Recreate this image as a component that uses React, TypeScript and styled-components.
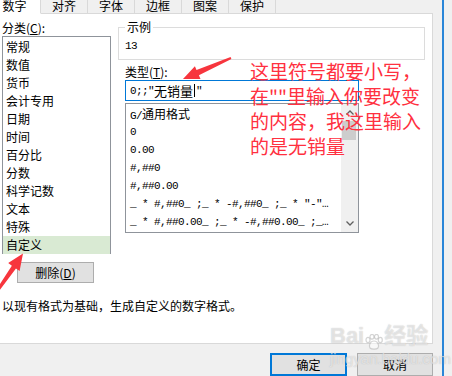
import React from 'react';
import styled, { createGlobalStyle } from 'styled-components';

const CJK = `"Noto Sans CJK SC", "Noto Sans", sans-serif`;
const MONO = `"Liberation Mono", "Noto Sans CJK SC", monospace`;

const GlobalStyle = createGlobalStyle`
  html, body { margin: 0; padding: 0; background: #f0f0f0; }
  #root { width: 452px; height: 376px; overflow: hidden; }
`;

// 整个截图
const Page = styled.div`
  position: relative;
  display: flex;
  width: 452px;
  height: 376px;
  overflow: hidden;
  background: #f0f0f0;
  font-family: ${CJK};
  font-size: 12px;
  color: #000;
`;

// 设置单元格格式 对话框
const Dialog = styled.div`
  display: flex;
  flex-direction: column;
  width: 433px;
  flex-shrink: 0;
`;

const TabBar = styled.div`
  display: flex;
  height: 14px;
  margin-left: -11px;
`;

const Tab = styled.div<{ $active?: boolean }>`
  box-sizing: border-box;
  width: ${p => (p.$active ? 52 : 47)}px;
  height: 14px;
  border-right: 1px solid #d9d9d9;
  border-bottom: 1px solid ${p => (p.$active ? '#fff' : '#d9d9d9')};
  background: ${p => (p.$active ? '#fff' : '#f0f0f0')};
  text-align: center;
  line-height: 11px;
  overflow: hidden;
`;

const TabFill = styled.div`
  flex: 1;
  border-bottom: 1px solid #d9d9d9;
`;

const Panel = styled.div`
  box-sizing: border-box;
  height: 332px;
  padding-left: 2px;
  background: #fff;
  border-right: 1px solid #d9d9d9;
  border-bottom: 1px solid #d9d9d9;
`;

const Columns = styled.div`
  display: flex;
  gap: 7px;
`;

const LeftCol = styled.div`
  display: flex;
  flex-direction: column;
  width: 109px;
  padding-top: 6px;
`;

const RightCol = styled.div`
  display: flex;
  flex-direction: column;
  width: 307px;
  padding-top: 7px;
`;

const FieldLabel = styled.div<{ $indent?: number }>`
  line-height: 16px;
  height: 16px;
  margin-left: ${p => p.$indent ?? 0}px;
  margin-top: ${p => (p.$indent ? 4 : 0)}px;
`;

const Mnemonic = styled.span`
  text-decoration: underline;
`;

const CategoryList = styled.div`
  box-sizing: border-box;
  width: 109px;
  height: 218px;
  padding-top: 1px;
  border: 1px solid #8f949b;
`;

const CategoryItem = styled.div<{ $selected?: boolean }>`
  height: 18px;
  line-height: 18px;
  padding-left: 3px;
  background: ${p => (p.$selected ? '#d9ead3' : 'transparent')};
`;

const PushButton = styled.div`
  box-sizing: border-box;
  width: 77px;
  height: 21px;
  margin: 8px 0 0 15px;
  border: 1px solid #adadad;
  background: #e1e1e1;
  text-align: center;
  line-height: 19px;
`;

const SampleBox = styled.fieldset`
  box-sizing: border-box;
  width: 307px;
  min-width: 0;
  margin: 0;
  padding: 5px 6px 5px;
  border: 1px solid #dcdcdc;
`;

const SampleLegend = styled.legend`
  padding: 0 2px;
  font-size: 12px;
  line-height: 12px;
`;

const SampleValue = styled.div`
  font-family: ${MONO};
  font-size: 11px;
  letter-spacing: -0.6px;
  line-height: 16px;
`;

const TypeInput = styled.div`
  box-sizing: border-box;
  display: flex;
  align-items: center;
  width: 234px;
  height: 21px;
  margin-left: 7px;
  padding-left: 4px;
  border: 1px solid #0078d7;
  font-family: ${MONO};
  font-size: 11px;
  letter-spacing: -0.6px;
`;

const Han = styled.span<{ $size?: number }>`
  font-family: ${CJK};
  font-size: ${p => p.$size ?? 12}px;
  letter-spacing: 0;
`;

const Caret = styled.span`
  display: inline-block;
  width: 1px;
  height: 13px;
  margin: 0 1px 0 1px;
  background: #000;
`;

const FormatList = styled.div`
  box-sizing: border-box;
  display: flex;
  width: 234px;
  height: 130px;
  margin: 2px 0 0 7px;
  border: 1px solid #8f949b;
`;

const FormatItems = styled.div`
  flex: 1;
  min-width: 0;
  padding: 1px 0 0 4px;
  overflow: hidden;
`;

const FormatItem = styled.div`
  height: 18px;
  line-height: 18px;
  font-family: ${MONO};
  font-size: 11px;
  letter-spacing: -0.6px;
  white-space: nowrap;
`;

const Scrollbar = styled.div`
  display: flex;
  flex-direction: column;
  width: 17px;
  background: #f0f0f0;
`;

const ScrollButton = styled.div`
  display: flex;
  align-items: center;
  justify-content: center;
  height: 17px;
`;

const ScrollThumb = styled.div`
  height: 19px;
  margin: 0 2px 0 1px;
  background: #cdcdcd;
`;

const ScrollTrack = styled.div`
  flex: 1;
`;

const Description = styled.div`
  margin-top: 15px;
  line-height: 16px;
`;

const Footer = styled.div`
  display: flex;
  justify-content: flex-end;
  gap: 10px;
  padding-top: 9px;
`;

const DialogButton = styled.div<{ $primary?: boolean }>`
  box-sizing: border-box;
  width: ${p => (p.$primary ? 77 : 76)}px;
  height: 23px;
  border: ${p => (p.$primary ? '2px solid #0078d7' : '1px solid #adadad')};
  background: #e1e1e1;
  text-align: center;
  line-height: ${p => (p.$primary ? 19 : 21)}px;
`;

// 右侧窗口边缘
const WindowEdge = styled.div`
  flex: 1;
  display: flex;
  padding-left: 9px;
`;

const BlueLine = styled.div`
  width: 2px;
  background: #2a86d8;
`;

// 红色标注
const Annotation = styled.div`
  position: absolute;
  left: 250px;
  top: 58px;
  font-size: 19px;
  line-height: 25px;
  color: #ff3040;
  white-space: pre;
`;

const ArrowLayer = styled.svg`
  position: absolute;
  left: 0;
  top: 0;
  pointer-events: none;
`;

// 百度经验水印
const Watermark = styled.div`
  position: absolute;
  left: 330px;
  top: 322px;
  display: flex;
  flex-direction: column;
  color: rgba(255, 255, 255, 0.55);
  text-shadow: 0 0 1px rgba(150, 150, 150, 0.6);
  font-family: "Liberation Sans", ${CJK};
  pointer-events: none;
`;

const WatermarkLogo = styled.div`
  display: flex;
  align-items: flex-end;
  font-size: 22px;
  font-weight: bold;
  line-height: 28px;
`;

const WatermarkUrl = styled.div`
  font-size: 15px;
  line-height: 18px;
`;

const categories = ['常规', '数值', '货币', '会计专用', '日期', '时间', '百分比', '分数', '科学记数', '文本', '特殊', '自定义'];

const formats: React.ReactNode[] = [
  <>G/<Han>通用格式</Han></>,
  '0',
  '0.00',
  '#,##0',
  '#,##0.00',
  '_ * #,##0_ ;_ * -#,##0_ ;_ * "-"…',
  '_ * #,##0.00_ ;_ * -#,##0.00_ ;_…',
];

const tabs = ['数字', '对齐', '字体', '边框', '图案', '保护'];

function Chevron({ down }: { down?: boolean }) {
  return (
    <svg width="8" height="5" viewBox="0 0 8 5">
      <path d={down ? 'M0.5 0.5 L4 4 L7.5 0.5' : 'M0.5 4.5 L4 1 L7.5 4.5'} fill="none" stroke="#606060" strokeWidth="1.3" />
    </svg>
  );
}

function Paw() {
  return (
    <svg width="20" height="16" viewBox="0 0 20 16">
      <g fill="rgba(255,255,255,0.5)" stroke="rgba(160,160,160,0.45)" strokeWidth="1.2">
        <ellipse cx="4" cy="6" rx="2" ry="2.6" />
        <ellipse cx="8" cy="2.8" rx="2" ry="2.4" />
        <ellipse cx="12.5" cy="2.8" rx="2" ry="2.4" />
        <ellipse cx="16.3" cy="6" rx="2" ry="2.6" />
        <path d="M10 7 C6 7 4.5 12 6 14 C7.5 15.5 12.5 15.5 14 14 C15.5 12 14 7 10 7 Z" />
      </g>
    </svg>
  );
}

export default function App() {
  return (
    <>
      <GlobalStyle />
      <Page>
        <Dialog>
          <TabBar>
            {tabs.map((t, i) => (
              <Tab key={t} $active={i === 0}>{t}</Tab>
            ))}
            <TabFill />
          </TabBar>
          <Panel>
            <Columns>
              <LeftCol>
                <FieldLabel>分类(<Mnemonic>C</Mnemonic>):</FieldLabel>
                <CategoryList>
                  {categories.map(c => (
                    <CategoryItem key={c} $selected={c === '自定义'}>{c}</CategoryItem>
                  ))}
                </CategoryList>
                <PushButton>删除(<Mnemonic>D</Mnemonic>)</PushButton>
              </LeftCol>
              <RightCol>
                <SampleBox>
                  <SampleLegend>示例</SampleLegend>
                  <SampleValue>13</SampleValue>
                </SampleBox>
                <FieldLabel $indent={7}>类型(<Mnemonic>T</Mnemonic>):</FieldLabel>
                <TypeInput>
                  0;;"<Han $size={13}>无销量</Han><Caret />"
                </TypeInput>
                <FormatList>
                  <FormatItems>
                    {formats.map((f, i) => (
                      <FormatItem key={i}>{f}</FormatItem>
                    ))}
                  </FormatItems>
                  <Scrollbar>
                    <ScrollButton><Chevron /></ScrollButton>
                    <ScrollThumb />
                    <ScrollTrack />
                    <ScrollButton><Chevron down /></ScrollButton>
                  </Scrollbar>
                </FormatList>
              </RightCol>
            </Columns>
            <Description>以现有格式为基础，生成自定义的数字格式。</Description>
          </Panel>
          <Footer>
            <DialogButton $primary>确定</DialogButton>
            <DialogButton>取消</DialogButton>
          </Footer>
        </Dialog>
        <WindowEdge>
          <BlueLine />
        </WindowEdge>

        <Annotation>{'这里符号都要小写，\n在""里输入你要改变\n的内容，我这里输入\n的是无销量'}</Annotation>

        <ArrowLayer width="452" height="376" viewBox="0 0 452 376">
          <polygon
            fill="#f7353d"
            points="230.6,57.1 196.5,69.9 194.9,66.2 183,79 200.5,79 198.9,75.3 231.4,58.9"
          />
          <polygon
            fill="#f7353d"
            points="-3.2,289.1 11.85,265.7 8.2,263.1 23,253.5 19.6,271.1 15.95,268.5 -0.8,290.9"
          />
        </ArrowLayer>

        <Watermark>
          <WatermarkLogo>
            <span>Bai</span>
            <Paw />
            <span>经验</span>
          </WatermarkLogo>
          <WatermarkUrl>jingyan.baidu.com</WatermarkUrl>
        </Watermark>
      </Page>
    </>
  );
}
